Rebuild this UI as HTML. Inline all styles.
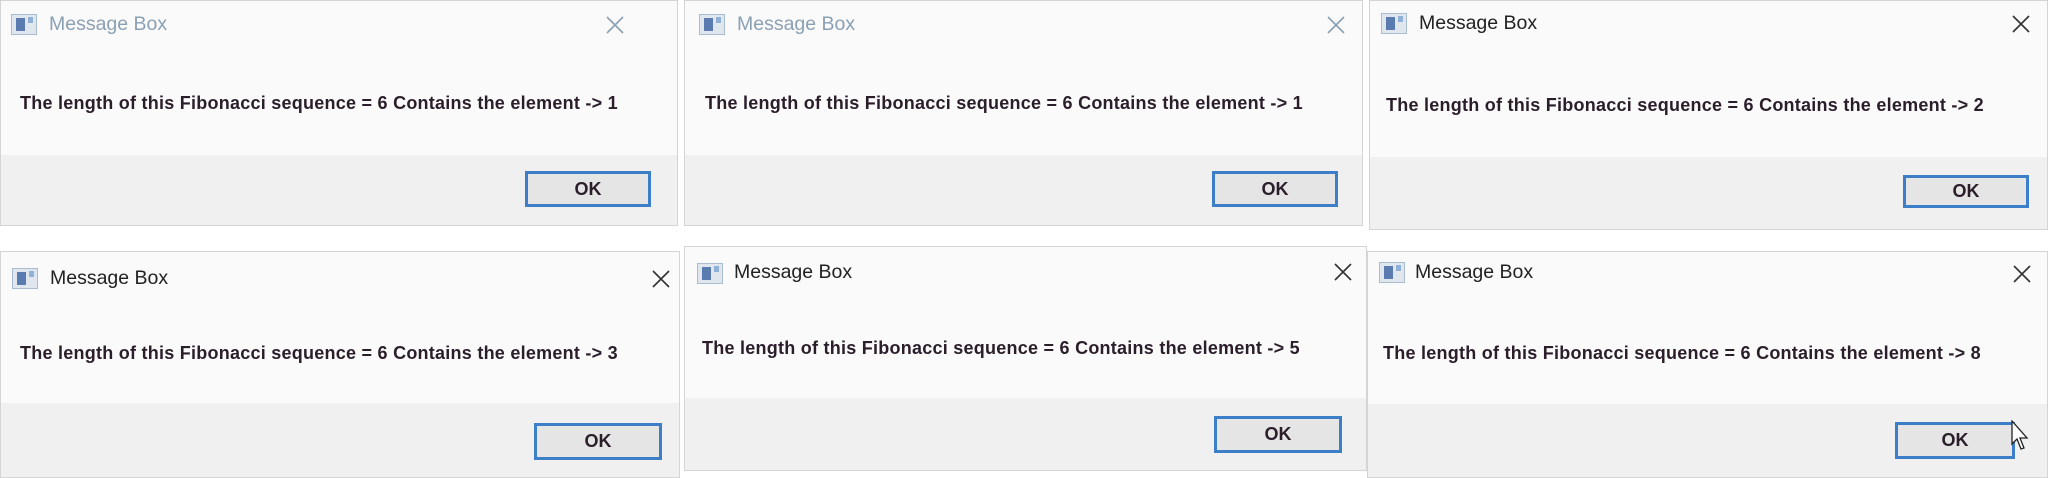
<!DOCTYPE html>
<html><head><meta charset="utf-8"><style>
html,body{margin:0;padding:0;width:2048px;height:478px;background:#fff;overflow:hidden;position:relative;font-family:"Liberation Sans",sans-serif}
.d{position:absolute;background:#fafafa;border:1px solid #d4d4d4;box-sizing:border-box;overflow:hidden}
.f{position:absolute;left:0;right:0;bottom:0;background:#f0f0f0}
.ic{position:absolute;width:26px;height:21px;background:#dfe6ee;border:1px solid #a9bcd0;box-sizing:border-box}
.ic:before{content:"";position:absolute;left:4px;top:3px;width:9px;height:13px;background:#5a7bb0}
.ic:after{content:"";position:absolute;right:3px;top:2px;width:5px;height:6px;background:#8fb1d8}
.t{position:absolute;font-size:19.5px;color:#222}
.x{position:absolute;width:20px;height:20px}
.x path{stroke:#333;stroke-width:1.6;fill:none}
.in .t{color:#8aa0b4}
.in .x path{stroke:#8aa0b4}
.m{position:absolute;font-size:18px;font-weight:bold;color:#2b1e2b;white-space:nowrap;letter-spacing:0.25px}
.b{position:absolute;background:#e5e5e5;border:3px solid #3c7fc8;box-sizing:border-box;font-size:18px;font-weight:bold;color:#2b1e2b;text-align:center}
</style></head><body>

<div class="d in" style="left:0;top:0;width:678px;height:226px">
 <div class="f" style="top:154px"></div>
 <div class="ic" style="left:10px;top:13px"></div>
 <div class="t" style="left:48px;top:12px">Message Box</div>
 <svg class="x" style="left:604px;top:14px" viewBox="0 0 20 20"><path d="M2 2L18 18M18 2L2 18"/></svg>
 <div class="m" style="left:19px;top:92px">The length of this Fibonacci sequence = 6 Contains the element -&gt; 1</div>
 <div class="b" style="left:524px;top:170px;width:126px;height:36px;line-height:30px">OK</div>
</div>

<div class="d in" style="left:684px;top:0;width:679px;height:226px">
 <div class="f" style="top:154px"></div>
 <div class="ic" style="left:14px;top:13px"></div>
 <div class="t" style="left:52px;top:12px">Message Box</div>
 <svg class="x" style="left:641px;top:14px" viewBox="0 0 20 20"><path d="M2 2L18 18M18 2L2 18"/></svg>
 <div class="m" style="left:20px;top:92px">The length of this Fibonacci sequence = 6 Contains the element -&gt; 1</div>
 <div class="b" style="left:527px;top:170px;width:126px;height:36px;line-height:30px">OK</div>
</div>

<div class="d" style="left:1369px;top:0;width:679px;height:230px">
 <div class="f" style="top:156px"></div>
 <div class="ic" style="left:11px;top:12px"></div>
 <div class="t" style="left:49px;top:11px">Message Box</div>
 <svg class="x" style="left:641px;top:13px" viewBox="0 0 20 20"><path d="M2 2L18 18M18 2L2 18"/></svg>
 <div class="m" style="left:16px;top:94px">The length of this Fibonacci sequence = 6 Contains the element -&gt; 2</div>
 <div class="b" style="left:533px;top:174px;width:126px;height:33px;line-height:27px">OK</div>
</div>

<div class="d" style="left:0;top:251px;width:680px;height:227px">
 <div class="f" style="top:151px"></div>
 <div class="ic" style="left:11px;top:16px"></div>
 <div class="t" style="left:49px;top:15px">Message Box</div>
 <svg class="x" style="left:650px;top:17px" viewBox="0 0 20 20"><path d="M2 2L18 18M18 2L2 18"/></svg>
 <div class="m" style="left:19px;top:91px">The length of this Fibonacci sequence = 6 Contains the element -&gt; 3</div>
 <div class="b" style="left:533px;top:171px;width:128px;height:37px;line-height:31px">OK</div>
</div>

<div class="d" style="left:684px;top:246px;width:683px;height:225px">
 <div class="f" style="top:151px"></div>
 <div class="ic" style="left:12px;top:16px"></div>
 <div class="t" style="left:49px;top:14px">Message Box</div>
 <svg class="x" style="left:648px;top:15px" viewBox="0 0 20 20"><path d="M2 2L18 18M18 2L2 18"/></svg>
 <div class="m" style="left:17px;top:91px">The length of this Fibonacci sequence = 6 Contains the element -&gt; 5</div>
 <div class="b" style="left:529px;top:169px;width:128px;height:37px;line-height:31px">OK</div>
</div>

<div class="d" style="left:1367px;top:251px;width:681px;height:227px">
 <div class="f" style="top:152px"></div>
 <div class="ic" style="left:11px;top:10px"></div>
 <div class="t" style="left:47px;top:9px">Message Box</div>
 <svg class="x" style="left:644px;top:12px" viewBox="0 0 20 20"><path d="M2 2L18 18M18 2L2 18"/></svg>
 <div class="m" style="left:15px;top:91px">The length of this Fibonacci sequence = 6 Contains the element -&gt; 8</div>
 <div class="b" style="left:527px;top:170px;width:120px;height:37px;line-height:31px">OK</div>
 <svg style="position:absolute;left:643px;top:168px" width="20" height="32" viewBox="0 0 20 32"><path d="M1 1L1 24L6 19L10 29L13 28L9 18L16 18Z" fill="#fff" stroke="#222" stroke-width="1.3"/></svg>
</div>
</body></html>
